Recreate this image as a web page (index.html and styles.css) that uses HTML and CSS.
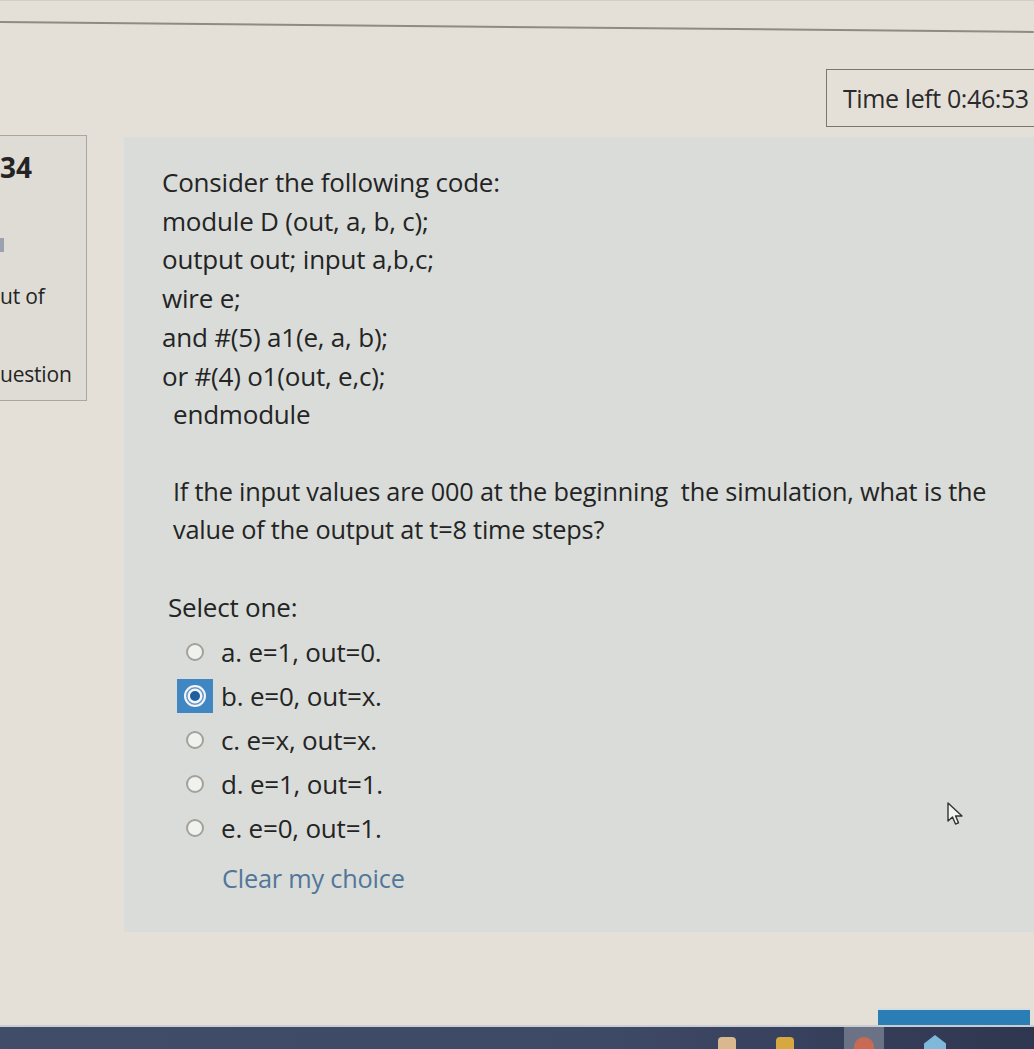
FILE: index.html
```html
<!DOCTYPE html>
<html>
<head>
<meta charset="utf-8">
<link rel="stylesheet" href="styles.css">
</head>
<body>
<div class="page">
  <div class="topbar"></div>
  <div class="timer-row">
    <div class="timer">Time left 0:46:53</div>
  </div>
  <div class="main">
    <div class="info">
      <div class="qno">34</div>
      <div class="mark"></div>
      <div class="info-line l1">ut of</div>
      <div class="info-line l2">uestion</div>
    </div>
    <div class="panel">
      <div class="code">
        <div>Consider the following code:</div>
        <div>module D (out, a, b, c);</div>
        <div>output out; input a,b,c;</div>
        <div>wire e;</div>
        <div>and #(5) a1(e, a, b);</div>
        <div>or #(4) o1(out, e,c);</div>
        <div class="indent">endmodule</div>
      </div>
      <div class="question">If the input values are 000 at the beginning&nbsp; the simulation, what is the value of the output at t=8 time steps?</div>
      <div class="select">Select one:</div>
      <div class="options">
        <div class="opt"><span class="radio"></span><span>a. e=1, out=0.</span></div>
        <div class="opt"><span class="radio-wrap"><span class="radio checked"></span></span><span>b. e=0, out=x.</span></div>
        <div class="opt"><span class="radio"></span><span>c. e=x, out=x.</span></div>
        <div class="opt"><span class="radio"></span><span>d. e=1, out=1.</span></div>
        <div class="opt"><span class="radio"></span><span>e. e=0, out=1.</span></div>
      </div>
      <div class="clear">Clear my choice</div>
    </div>
  </div>
  <div class="spacer"></div>
  <div class="tab-row">
    <div class="blue-tab"></div>
  </div>
  <div class="taskbar">
    <span class="tb-icon i1"></span>
    <span class="tb-icon i2"></span>
    <span class="tb-cell"><span class="tb-icon i3"></span></span>
    <span class="tb-icon i4"></span>
  </div>
  <svg class="cursor" width="20" height="26" viewBox="0 0 20 26">
    <path d="M2 2 L2 20 L6.5 16 L9.5 23 L12.5 21.8 L9.6 15 L16 15 Z" fill="#f4f4f2" stroke="#333" stroke-width="1.4" stroke-linejoin="round"/>
  </svg>
</div>
</body>
</html>
```
FILE: styles.css
```css
* { box-sizing: border-box; }
html, body { margin: 0; padding: 0; }
body {
  background: #e5e0d7;
  font-family: "Open Sans", "Noto Sans", sans-serif;
  color: #242424;
  overflow: hidden;
}
.page {
  position: relative;
  height: 1049px;
  display: flex;
  flex-direction: column;
  border-top: 1px solid #d2cdc5;
}
.topbar {
  height: 27px;
  border-bottom: 2px solid #8e8a84;
  transform: rotate(0.55deg);
  transform-origin: left top;
  margin-top: -5px;
}
.timer-row {
  display: flex;
  justify-content: flex-end;
  margin-top: 46px;
}
.timer {
  width: 216px;
  height: 58px;
  margin-right: -8px;
  border: 1.5px solid #7a7670;
  border-right: none;
  padding-left: 16px;
  font-size: 25px;
  line-height: 56px;
  letter-spacing: -0.4px;
  color: #2a2a2c;
  white-space: nowrap;
}
.main {
  display: flex;
  align-items: flex-start;
  margin-top: 10px;
}
.info {
  width: 87px;
  height: 266px;
  margin-top: -2px;
  border: 1.5px solid #a9a7a3;
  border-left: none;
  background: #dfdcd6;
}
.qno {
  font-weight: 700;
  font-size: 28px;
  margin-top: 14px;
  line-height: 34px;
}
.mark {
  width: 4px;
  height: 14px;
  margin-top: 54px;
  background: #9aa3ad;
}
.info-line {
  font-size: 21px;
  line-height: 26px;
  letter-spacing: -0.2px;
}
.l1 { margin-top: 31px; }
.l2 { margin-top: 52px; }
.panel {
  flex: 1;
  margin-left: 37px;
  height: 795px;
  background: #d9dcd9;
  padding: 26px 0 0 38px;
  font-size: 26px;
  letter-spacing: -0.2px;
}
.code div { line-height: 38.7px; }
.code .indent { padding-left: 11px; }
.question {
  margin-top: 38px;
  padding-left: 11px;
  line-height: 38px;
  width: 870px;
  font-size: 25.3px;
}
.select {
  margin-top: 40px;
  padding-left: 6px;
  line-height: 38px;
}
.options {
  margin-top: 4px;
  padding-left: 24px;
}
.opt {
  display: flex;
  align-items: center;
  height: 44px;
  gap: 17px;
}
.radio {
  display: inline-block;
  width: 18px;
  height: 18px;
  border-radius: 50%;
  border: 2px solid #a3a19b;
  background: #f1f1ee;
  flex: none;
}
.radio-wrap {
  display: inline-flex;
  align-items: center;
  justify-content: center;
  width: 36px;
  height: 34px;
  margin-left: -9px;
  margin-right: -9px;
  background: #3f86c2;
  flex: none;
}
.radio.checked {
  width: 22px;
  height: 22px;
  border: 2.5px solid #f2f4f6;
  background: #1f5f9f;
  box-shadow: inset 0 0 0 1.5px #5a92c8, inset 0 0 0 4px #f2f4f6;
}
.clear {
  margin-top: 9px;
  padding-left: 60px;
  color: #52769a;
  line-height: 38px;
  font-size: 25.3px;
}
.spacer { flex: 1; }
.tab-row {
  display: flex;
  justify-content: flex-end;
}
.blue-tab {
  width: 152px;
  height: 17px;
  margin-right: 4px;
  background: #2b7db5;
  border-top: 2px solid #d8dde0;
}
.taskbar {
  height: 24px;
  background: linear-gradient(90deg, #414c68 0%, #3e4966 60%, #2f3650 100%);
  border-top: 2px solid #c9ccd0;
  display: flex;
  align-items: flex-end;
}
.tb-icon {
  display: inline-block;
  width: 18px;
  height: 12px;
  border-radius: 4px 4px 0 0;
}
.i1 { margin-left: 718px; background: #d9b890; }
.i2 { margin-left: 40px; background: #d8a840; }
.tb-cell {
  margin-left: 50px;
  width: 40px;
  height: 22px;
  background: #6c7286;
  display: flex;
  align-items: flex-end;
  justify-content: center;
}
.i3 { width: 20px; height: 12px; border-radius: 10px 10px 0 0; background: #c96a55; }
.i4 { margin-left: 40px; width: 22px; height: 14px; background: #7fb8d8; clip-path: polygon(50% 0, 100% 60%, 100% 100%, 0 100%, 0 60%); border-radius: 0; }
.cursor {
  position: absolute;
  left: 946px;
  top: 800px;
}
```
